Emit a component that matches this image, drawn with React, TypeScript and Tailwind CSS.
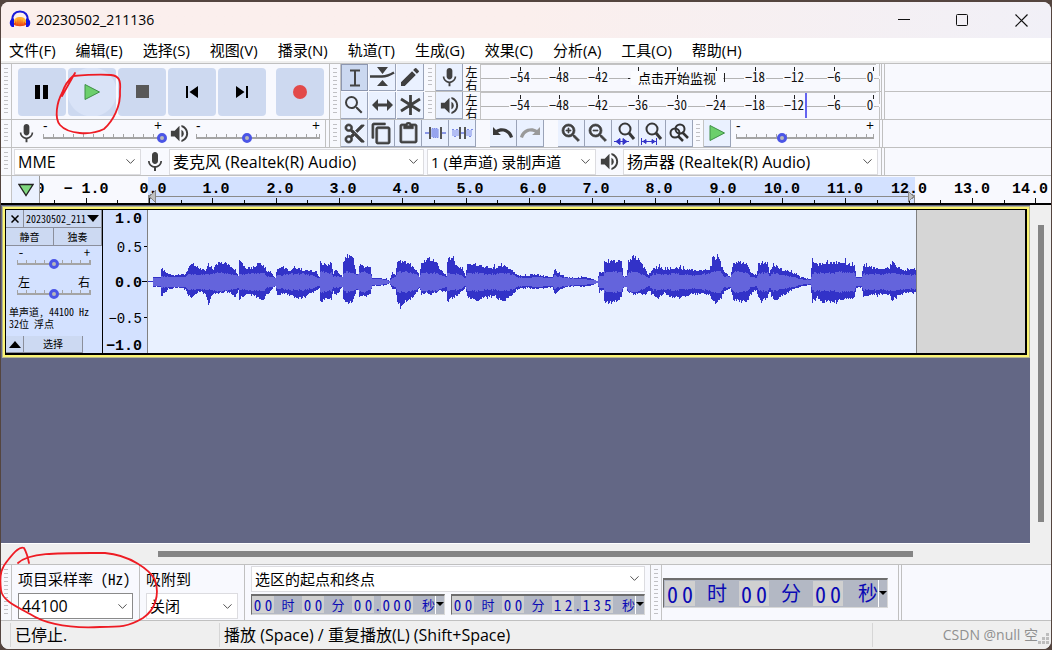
import type { ReactNode } from "react";
import {
  MdContentCopy,
  MdContentCut,
  MdContentPaste,
  MdEdit,
  MdMic,
  MdSearch,
  MdSkipNext,
  MdSkipPrevious,
  MdVolumeUp,
  MdZoomIn,
  MdZoomOut,
} from "react-icons/md";
import { ChevronDown } from "lucide-react";

const FIXED = "font-['Noto_Sans_CJK_SC',sans-serif] [font-feature-settings:'hwid']";
const SCALE = "font-['Liberation_Mono',monospace]";

/* [x, peak above, peak below, rms] */
const ENVELOPE: number[][] = [
  [0, 0, 0, 0], [4, 0, 0, 0], [5, 5, 5, 4], [12, 5, 5, 4], [13, 15, 15, 6], [15, 11, 13, 6], [20, 8, 7, 5],
  [27, 7, 6, 5], [32, 8, 6, 5], [37, 8, 7, 5], [40, 14, 14, 8], [44, 19, 15, 8], [50, 14, 10, 7],
  [57, 12, 12, 8], [60, 18, 22, 8], [65, 13, 12, 8], [68, 19, 12, 9], [74, 20, 11, 9], [80, 17, 10, 8],
  [86, 12, 16, 7], [90, 7, 8, 6], [91, 21, 17, 8], [98, 14, 14, 8], [104, 14, 13, 8], [109, 18, 17, 9],
  [115, 18, 18, 9], [118, 12, 14, 6], [122, 10, 9, 5], [127, 4, 4, 4], [129, 14, 14, 7], [134, 14, 12, 7],
  [142, 12, 13, 8], [149, 14, 17, 8], [156, 12, 16, 8], [162, 12, 12, 7], [168, 10, 9, 5], [171, 5, 6, 4],
  [172, 21, 20, 10], [175, 18, 18, 10], [183, 19, 18, 9], [185, 9, 10, 5], [188, 12, 14, 6], [194, 5, 5, 5],
  [195, 22, 19, 9], [199, 27, 22, 10], [205, 23, 20, 9], [208, 8, 8, 7], [210, 8, 8, 7], [211, 17, 14, 9],
  [216, 16, 15, 10], [222, 14, 12, 8], [224, 4, 4, 3], [232, 4, 4, 3], [238, 3, 3, 2], [241, 1, 1, 1],
  [244, 10, 8, 4], [247, 7, 7, 5], [249, 20, 20, 10], [252, 22, 24, 10], [257, 20, 20, 10], [262, 18, 17, 9],
  [267, 13, 13, 8], [271, 6, 6, 5], [273, 20, 12, 9], [280, 24, 12, 9], [286, 22, 12, 9], [292, 12, 9, 7],
  [298, 7, 10, 5], [299, 22, 20, 9], [303, 24, 17, 8], [308, 17, 14, 8], [314, 14, 9, 6], [317, 6, 6, 4],
  [319, 17, 16, 9], [326, 18, 19, 9], [337, 15, 16, 8], [347, 14, 15, 8], [352, 18, 20, 9], [358, 16, 18, 9],
  [364, 13, 14, 7], [368, 7, 8, 5], [377, 6, 6, 4], [387, 8, 7, 5], [397, 6, 6, 4], [404, 5, 5, 4],
  [406, 13, 12, 7], [412, 7, 8, 5], [419, 5, 5, 4], [427, 4, 4, 3], [437, 5, 5, 3], [444, 3, 3, 2],
  [449, 1, 1, 1], [451, 11, 10, 6], [455, 10, 8, 6], [456, 22, 21, 10], [462, 22, 21, 11], [473, 21, 17, 10],
  [475, 6, 6, 5], [478, 6, 6, 5], [480, 20, 11, 9], [485, 26, 12, 10], [491, 22, 12, 9], [496, 14, 13, 7],
  [500, 7, 9, 4], [505, 14, 14, 8], [509, 15, 17, 8], [516, 13, 12, 7], [522, 14, 15, 8], [530, 14, 17, 8],
  [542, 12, 13, 7], [552, 11, 12, 7], [561, 13, 13, 9], [565, 24, 22, 11], [571, 22, 20, 11], [576, 9, 10, 6],
  [582, 6, 6, 5], [585, 18, 18, 10], [591, 20, 21, 11], [599, 17, 19, 9], [602, 11, 13, 5], [608, 7, 8, 4],
  [610, 18, 16, 8], [613, 20, 21, 9], [619, 20, 16, 9], [621, 10, 10, 6], [625, 18, 18, 9], [634, 12, 15, 7],
  [644, 10, 8, 5], [652, 5, 5, 3], [662, 3, 3, 2], [664, 24, 20, 9], [669, 17, 16, 9], [674, 19, 20, 9],
  [682, 19, 21, 9], [692, 20, 19, 10], [706, 17, 16, 9], [708, 5, 6, 4], [713, 5, 6, 4], [715, 17, 15, 8],
  [722, 15, 13, 8], [732, 14, 13, 8], [741, 15, 14, 8], [744, 20, 18, 9], [750, 14, 14, 8], [757, 12, 11, 7],
  [768, 13, 11, 7],
];

function buildWave() {
  let peaks = "";
  let rms = "";
  let seg = 0;
  let seed = 17;
  const rand = () => {
    seed = (seed * 1103515245 + 12345) % 2147483648;
    return seed / 2147483648;
  };
  for (let x = 5; x < 768; x++) {
    while (ENVELOPE[seg + 1][0] <= x && seg < ENVELOPE.length - 2) seg++;
    const a = ENVELOPE[seg];
    const b = ENVELOPE[seg + 1];
    const t = (x - a[0]) / (b[0] - a[0]);
    const at = (i: number) => a[i] + (b[i] - a[i]) * t;
    const up = Math.round(at(1) * (0.88 + rand() * (rand() > 0.9 ? 0.38 : 0.2)));
    const down = Math.round(at(2) * (0.86 + rand() * (rand() > 0.93 ? 0.3 : 0.2)));
    const r = Math.round(at(3) * (0.9 + rand() * 0.2));
    peaks += `M${x} ${72 - up}h1v${up + down}h-1z`;
    rms += `M${x} ${72 - r}h1v${r * 2}h-1z`;
  }
  return { peaks, rms };
}
const WAVE = buildWave();

function Grip() {
  return (
    <div className="flex w-[11px] shrink-0 justify-center self-stretch border-r border-[#c4c4c4] py-1">
      <div className="w-1 bg-[repeating-linear-gradient(to_bottom,#c0c0c4_0_1px,transparent_1px_4px)]" />
    </div>
  );
}

function ToolButton({ label, pressed, children }: { label: string; pressed?: boolean; children: ReactNode }) {
  return (
    <button
      aria-label={label}
      className={
        pressed
          ? "flex h-[27px] w-[27px] shrink-0 items-center justify-center border border-[#8d97b0] bg-[#cbd8f0] text-[#444]"
          : "flex h-[27px] w-[27px] shrink-0 items-center justify-center border-r border-b border-[#9aa3b8] bg-[#eaf1ff] text-[#404040]"
      }
    >
      {children}
    </button>
  );
}

function Slider({ label, value, dense, low = "-", high = "+" }: { label: string; value: number; dense?: boolean; low?: string; high?: string }) {
  return (
    <label className="flex min-w-0 flex-1 flex-col self-start">
      <span className={dense ? "flex h-3 justify-between px-[6px] text-xs leading-3" : "flex h-3 justify-between px-[5px] text-sm leading-3"}>
        <span>{low}</span>
        <span>{high}</span>
      </span>
      <span className="grid h-[11px] items-center">
        <span
          className={
            dense
              ? "col-start-1 row-start-1 mx-[5px] mb-[2px] h-[5px] border-r border-b-2 border-[#a4a4a4] bg-[repeating-linear-gradient(to_right,#a4a4a4_0_1px,transparent_1px_9px)]"
              : "col-start-1 row-start-1 mx-[5px] mb-[2px] h-[5px] border-r border-b-2 border-[#a4a4a4] bg-[repeating-linear-gradient(to_right,#a4a4a4_0_1px,transparent_1px_10px)]"
          }
        />
        <input
          type="range"
          aria-label={label}
          defaultValue={value}
          className="col-start-1 row-start-1 h-[11px] w-full appearance-none bg-transparent [&::-webkit-slider-thumb]:h-[10px] [&::-webkit-slider-thumb]:w-[10px] [&::-webkit-slider-thumb]:appearance-none [&::-webkit-slider-thumb]:rounded-full [&::-webkit-slider-thumb]:border-[3px] [&::-webkit-slider-thumb]:border-[#4b55e6] [&::-webkit-slider-thumb]:bg-[#b8b8b8]"
        />
      </span>
    </label>
  );
}

function Combo({ label, id, value, dark, cjk }: { label?: string; id?: string; value: string; dark?: boolean; cjk?: boolean }) {
  return (
    <div className="grid min-w-0 flex-1 items-center">
      <select
        id={id}
        aria-label={label}
        className={
          dark
            ? "col-start-1 row-start-1 h-[26px] w-full appearance-none border border-[#8a8a8a] bg-white pl-[3px] text-base leading-6 text-black"
            : cjk
              ? "col-start-1 row-start-1 h-[26px] w-full appearance-none border border-[#dcdce0] bg-white pl-[3px] text-[15px] leading-6 text-black"
              : "col-start-1 row-start-1 h-[26px] w-full appearance-none border border-[#dcdce0] bg-white pl-[3px] text-base leading-6 text-black"
        }
      >
        <option>{value}</option>
      </select>
      <ChevronDown className="pointer-events-none col-start-1 row-start-1 mr-[3px] justify-self-end text-[#444]" size={15} strokeWidth={1.5} />
    </div>
  );
}

function Meter({ monitor, marker }: { monitor?: boolean; marker?: number }) {
  const ticks = [-54, -48, -42, -36, -30, -24, -18, -12, -6, 0];
  return (
    <svg width="401" height="27" className="shrink-0" shapeRendering="crispEdges">
      <path d="M0.5 0v27M0 0.5h396M396 14.5h3M399.5 0v12M399.5 15v12" stroke="#c2c2c2" fill="none" />
      <path d="M1 14.5h395" stroke="#b4b4b4" />
      {ticks.map((t, i) => {
        const x = Math.round(40 + i * 39.2);
        const tx = t === 0 ? x - 3 : x;
        const covered = monitor && t <= -24 && t >= -36;
        return (
          <g key={t}>
            <path d={`M${x + 0.5} 3v4`} stroke="#222" />
            {!covered && (
              <>
                <rect x={tx - (t === 0 ? 4 : t === -6 ? 7 : 11)} y="9" width={t === 0 ? 8 : t === -6 ? 14 : 22} height="10" fill="#f8f9fe" />
                <text x={tx} y="18" textAnchor="middle" fontSize="13" fill="#111" className={FIXED}>
                  {t < 0 ? `−${-t}` : t}
                </text>
              </>
            )}
          </g>
        );
      })}
      {marker && <path d={`M${marker} 1v25`} stroke="#6464f0" strokeWidth="2" />}
      {monitor && (
        <g>
          <rect x="151" y="7" width="92" height="14" fill="#fbfcff" />
          <path d="M148 14.5h2M244.500 9v9" stroke="#222" />
          <text x="158" y="19" fontSize="13" fill="#000" className="font-['Noto_Sans_CJK_SC',sans-serif]">
            点击开始监视
          </text>
        </g>
      )}
    </svg>
  );
}

function TransportButton({ label, hover, children }: { label: string; hover?: boolean; children: ReactNode }) {
  return (
    <button
      aria-label={label}
      className={
        hover
          ? "flex size-12 items-center justify-center rounded bg-[radial-gradient(circle,#d9e3f7_24px,#cdd9f0_25px)]"
          : "flex size-12 items-center justify-center rounded bg-[#cdd9f0]"
      }
    >
      {children}
    </button>
  );
}

const PlayGlyph = () => (
  <svg width="18" height="18" viewBox="0 0 18 18">
    <path d="M2 1.5 16.500 9 2 16.500z" fill="#6ccf6c" stroke="#3f8f46" strokeWidth="1" />
  </svg>
);

const Lens = ({ kind }: { kind: "sel" | "fit" }) => (
  <svg width="22" height="24" viewBox="0 0 22 24" fill="none">
    <circle cx="11" cy="8" r="5.500" stroke="#383838" strokeWidth="2" />
    <path d="m15 12 5 6" stroke="#383838" strokeWidth="3" />
    {kind === "sel" ? (
      <path d="M0 20.500h15M6 17.500v6l-4-3zM9 17.500v6l4-3z" stroke="#3535c8" fill="#3535c8" />
    ) : (
      <path d="M0.5 17v7M15.500 17v7M1 20.500h14M2 20.500l3-2v4zM14 20.500l-3-2v4z" stroke="#3535c8" fill="#3535c8" />
    )}
  </svg>
);

const MENU = ["文件(F)", "编辑(E)", "选择(S)", "视图(V)", "播录(N)", "轨道(T)", "生成(G)", "效果(C)", "分析(A)", "工具(O)", "帮助(H)"];

function DockEnd() {
  return <div className="flex-1 self-stretch border-l-4 border-double border-[#c0c0c0]" />;
}

function Timeline() {
  const x0 = 109;
  const pitch = 63.3;
  const ticks: ReactNode[] = [];
  for (let i = -3; i <= 28; i++) {
    const x = Math.round(x0 + (i * pitch) / 2) + 0.5;
    ticks.push(<path key={i} d={`M${x} ${i % 2 === 0 ? 22 : 24}V27`} stroke="#111" />);
  }
  return (
    <svg className="h-[27px] min-w-0 flex-1" shapeRendering="crispEdges">
      <rect x="108" y="1" width="767" height="26" fill="#d3e1ff" />
      {Array.from({ length: 17 }, (_, k) => k - 2).map((n) => {
        const x = Math.round(x0 + n * pitch) + (n >= 0 && n < 10 ? 4 : 0) - (n === 14 ? 5 : 0);
        return (
          <text key={n} x={x} y="17" textAnchor="middle" fontSize="15" fontWeight="700" fill="#000" xmlSpace="preserve" className={SCALE}>
            {n < 0 ? `− ${-n}.0` : `${n}.0`}
          </text>
        );
      })}
      {ticks}
      <path d="M113 20.500h756M108.500 19v8M874.500 19v8" stroke="#8a8a8a" strokeWidth="1" />
      <path d="M115 15v11l-6-5.500zM868 15v11l6-5.500z" fill="#c0c0c0" stroke="#888" />
    </svg>
  );
}

function Digits({ text, big }: { text: string; big?: boolean }) {
  return (
    <span
      className={
        big
          ? "flex h-[25px] w-[30px] items-center justify-around bg-[#d0d0d0]"
          : text.length === 3
            ? "flex h-[17px] w-8 items-center justify-around bg-[#d0d0d0]"
            : "flex h-[17px] w-[22px] items-center justify-around bg-[#d0d0d0]"
      }
    >
      {text.split("").map((c, i) => (
        <span key={i}>{c}</span>
      ))}
    </span>
  );
}

function TimeField({ label, s, ms }: { label: string; s: string; ms: string }) {
  return (
    <div
      role="group"
      aria-label={label}
      className="flex h-[21px] w-[194px] items-center border border-t-2 border-[#d8d8d8] border-t-[#6e6e6e] border-l-[#6e6e6e] bg-[#b3b8c4] text-[15px] leading-4 text-[#0a0ab4]"
    >
      <Digits text="00" />
      <span className="w-7 text-center text-[13px]">时</span>
      <Digits text="00" />
      <span className="w-7 text-center text-[13px]">分</span>
      <Digits text={s} />
      <span className="w-[7px] text-center">.</span>
      <Digits text={ms} />
      <span className="flex-1 text-right text-[13px]">秒</span>
      <DropButton />
    </div>
  );
}

function DropButton() {
  return (
    <button aria-label="时间格式" className="flex w-[9px] items-center justify-center self-stretch border-l border-white text-black">
      <svg width="8" height="5">
        <path d="M0 0h8L4 4z" fill="#000" />
      </svg>
    </button>
  );
}

const cell = "flex items-center justify-center border-r border-b border-[#8b8f9c] bg-[#ccd9f2]";
const heavy = { stroke: "currentColor", strokeWidth: 0.7, className: "[&>[fill=none]]:stroke-none" };

export default function App() {
  return (
    <div className="relative flex min-h-screen flex-col overflow-hidden bg-[#54453f] pt-[2px] pr-px pb-px pl-px font-['Open_Sans','Noto_Sans_CJK_SC',sans-serif] text-black">
      <div className="flex flex-1 flex-col overflow-hidden rounded-lg bg-[#f8f9fe]">
        <header className="flex h-9 items-center bg-linear-to-r from-[#fbefed] from-50% to-[#f1f0f7] pl-2">
          <svg width="22" height="20" viewBox="0 0 22 20">
            <path d="M4 13c1-5 4-6 7-6s6 1 7 6c-2 4-12 4-14 0z" fill="#ffb030" />
            <path d="M4 13h2l1-3 1 5 1-7 1 8 1-8 1 7 1-6 1 6 1-4 1 2h2v1c-3 3-11 3-14 0z" fill="#ef4a16" />
            <path d="M3 11C3 4.500 6 1.500 11 1.500S19 4.500 19 11" stroke="#1a1ad8" strokeWidth="2" fill="none" />
            <path d="M3 8.500h2v8.500H3c-3-2-3-6 0-8.500zM19 8.500h-2v8.500h2c3-2 3-6 0-8.500z" fill="#1414e0" />
          </svg>
          <h1 className="ml-[5px] flex-1 text-sm leading-5">20230502_211136</h1>
          <button aria-label="最小化" className="flex h-9 w-[58px] items-center justify-center">
            <svg width="12" height="12"><path d="M0 5.500h12" stroke="#111" /></svg>
          </button>
          <button aria-label="最大化" className="flex h-9 w-[58px] items-center justify-center">
            <svg width="13" height="13"><rect x="0.5" y="0.5" width="11" height="11" rx="1" stroke="#111" fill="none" /></svg>
          </button>
          <button aria-label="关闭窗口" className="flex h-9 w-[60px] items-center justify-center">
            <svg width="13" height="13"><path d="m0.500 0.500 12 12m0-12-12 12" stroke="#111" strokeWidth="1.200" /></svg>
          </button>
        </header>

        <nav className="flex h-[25px] items-center gap-5 border-b-2 border-[#efefef] bg-white pl-2">
          {MENU.map((m) => (
            <button key={m} className="text-[15px] leading-6 whitespace-nowrap">{m}</button>
          ))}
        </nav>

        <section aria-label="工具栏" className="border-t border-[#c0c0c0]">
          <div className="flex h-14 border-b border-[#c0c0c0]">
            <div className="flex w-[329px] border-r border-[#c0c0c0]">
              <Grip />
              <div className="flex items-center gap-[2px] pl-[6px]">
                <TransportButton label="暂停">
                  <svg width="14" height="14"><path d="M0 0h5v14H0zM8 0h5v14H8z" fill="#000" /></svg>
                </TransportButton>
                <TransportButton label="播放" hover><PlayGlyph /></TransportButton>
                <TransportButton label="停止"><span className="size-[13px] bg-[#585858]" /></TransportButton>
                <TransportButton label="跳到开头"><MdSkipPrevious size={24} /></TransportButton>
                <TransportButton label="跳到结尾"><MdSkipNext size={24} /></TransportButton>
                <div className="pl-2">
                  <TransportButton label="录制"><span className="size-[14px] rounded-full bg-[#e24a4a]" /></TransportButton>
                </div>
              </div>
            </div>
            <Grip />
            <div className="grid grid-cols-3 gap-px pr-px">
              <ToolButton label="选择工具" pressed>
                <svg width="12" height="18"><path d="M1 1.500h10M1 16.500h10M6 1v16" stroke="#444" strokeWidth="2" /></svg>
              </ToolButton>
              <ToolButton label="包络工具">
                <svg width="25" height="20"><path d="M7 0h11l-5.500 7zM7 19h11l-5.500-6z" fill="#404040" /><path d="M0 9.500h12c5 0 7-1 12-4" stroke="#404040" strokeWidth="2.500" fill="none" /></svg>
              </ToolButton>
              <ToolButton label="绘制工具"><MdEdit size={24} /></ToolButton>
              <ToolButton label="缩放工具"><MdSearch size={24} /></ToolButton>
              <ToolButton label="时间移动工具">
                <svg width="21" height="14"><path d="M0 7l6-6v4.500h9V1l6 6-6 6V8.500H6V13z" fill="#404040" /></svg>
              </ToolButton>
              <ToolButton label="多功能工具">
                <svg width="21" height="20"><path d="M10.500 0v20M1 4l19 12M20 4 1 16" stroke="#404040" strokeWidth="2.800" /></svg>
              </ToolButton>
            </div>
            <div className="flex flex-col">
              <div className="flex h-7 border-b border-[#c0c0c0]">
                <Grip />
                <ToolButton label="录制电平"><MdMic size={23} /></ToolButton>
                <div className="flex w-[17px] flex-col items-center pt-px font-['Noto_Sans_CJK_SC',sans-serif] text-xs leading-[13px]"><span>左</span><span>右</span></div>
                <Meter monitor />
              </div>
              <div className="flex h-[27px]">
                <Grip />
                <ToolButton label="播放电平"><MdVolumeUp size={23} /></ToolButton>
                <div className="flex w-[17px] flex-col items-center pt-px font-['Noto_Sans_CJK_SC',sans-serif] text-xs leading-[13px]"><span>左</span><span>右</span></div>
                <Meter marker={326} />
              </div>
            </div>
            <div className="flex flex-1 flex-col border-l-4 border-double border-[#c0c0c0]">
              <div className="h-7 border-b border-[#c0c0c0]" />
            </div>
          </div>

          <div className="flex h-7 border-b border-[#c0c0c0]">
            <div className="flex w-[325px] items-center border-r border-[#c0c0c0]">
              <Grip />
              <MdMic size={23} className="ml-[3px] shrink-0 text-[#404040]" />
              <div className="flex w-[129px] self-stretch"><Slider label="录制音量" value={100} /></div>
              <MdVolumeUp size={23} className="ml-px shrink-0 text-[#404040]" />
              <Slider label="播放音量" value={41} />
            </div>
            <div className="w-1 border-r border-[#c0c0c0]" />
            <Grip />
            <ToolButton label="剪切"><MdContentCut size={23} {...heavy} /></ToolButton>
            <ToolButton label="复制"><MdContentCopy size={23} {...heavy} /></ToolButton>
            <ToolButton label="粘贴"><MdContentPaste size={23} {...heavy} /></ToolButton>
            <ToolButton label="修剪音频">
              <svg width="21" height="16"><path d="M0 8h5M16 8h5" stroke="#6a7ae0" strokeWidth="1.500" /><path d="M5 2v12M16 2v12" stroke="#555" strokeWidth="2" /><path d="M7 12V4q1-2 1 0v8q1 2 1 0V4q1-2 1 0v8q1 2 1 0V4q1-2 1 0v8q1 2 1 0V4" stroke="#7a8ae8" fill="none" /></svg>
            </ToolButton>
            <ToolButton label="静音音频">
              <svg width="21" height="16"><path d="M9 8h4" stroke="#6a7ae0" strokeWidth="1.500" /><path d="M8 2v12M13 2v12" stroke="#555" strokeWidth="2" /><path d="M0 11V5q1-2 2 0v6q1 2 2 0V5q1-2 2 0v6M15 11V5q1-2 2 0v6q1 2 2 0V5q1-2 2 0" stroke="#7a8ae8" fill="none" /></svg>
            </ToolButton>
            <div className="ml-[14px] flex">
              <ToolButton label="撤销">
                <svg width="22" height="18"><path d="M1 3v8h8L6 8.500C11 6 16 8 18 14l3-1C19 5 10 2 4 6z" fill="#383838" /></svg>
              </ToolButton>
              <ToolButton label="重做">
                <svg width="22" height="18"><path d="M21 3v8h-8l3-2.500C11 6 6 8 4 14l-3-1C3 5 12 2 18 6z" fill="#9a9a9a" /></svg>
              </ToolButton>
            </div>
            <div className="ml-[14px] flex">
              <ToolButton label="放大"><MdZoomIn size={24} {...heavy} /></ToolButton>
              <ToolButton label="缩小"><MdZoomOut size={24} {...heavy} /></ToolButton>
              <ToolButton label="适应选区"><Lens kind="sel" /></ToolButton>
              <ToolButton label="适应项目"><Lens kind="fit" /></ToolButton>
              <ToolButton label="切换缩放">
                <svg width="20" height="20" fill="none" stroke="#333" strokeWidth="2"><circle cx="11" cy="6" r="4.500" /><circle cx="6" cy="10" r="4.500" /><path d="m13 9 6 6M9 13l5 5" strokeWidth="2.500" /></svg>
              </ToolButton>
            </div>
            <Grip />
            <ToolButton label="按速度播放"><PlayGlyph /></ToolButton>
            <div className="flex w-[148px]"><Slider label="播放速度" value={33} /></div>
            <DockEnd />
          </div>

          <div className="flex h-7 items-center border-b border-[#c0c0c0]">
            <Grip />
            <div className="flex w-[129px] pl-[2px]"><Combo label="音频主机" value="MME" /></div>
            <MdMic size={24} className="mx-[2px] shrink-0 text-[#404040]" />
            <div className="flex w-[255px]"><Combo label="录制设备" value="麦克风 (Realtek(R) Audio)" /></div>
            <div className="flex w-[172px] pl-[3px]"><Combo label="录制声道数" value="1 (单声道) 录制声道" cjk /></div>
            <MdVolumeUp size={23} className="mx-[2px] shrink-0 text-[#404040]" />
            <div className="flex w-[258px] pr-[3px]"><Combo label="播放设备" value="扬声器 (Realtek(R) Audio)" /></div>
            <DockEnd />
          </div>
        </section>

        <div className="flex h-[29px] border-b-2 border-black">
          <div className="w-[11px] border-r border-[#c4c4c4]" />
          <button aria-label="固定播放头" className="flex w-7 items-center justify-center border-r border-[#999] bg-[#eaf1ff]">
            <svg width="16" height="14"><path d="M1 1.500h14l-7 11z" fill="#7fd87f" stroke="#222" strokeWidth="1.300" /></svg>
          </button>
          <Timeline />
        </div>

        <main className="flex flex-1 bg-[#efefef]">
          <div className="flex flex-1 flex-col border-b border-white bg-[#636785] pt-px pl-px">
            <div className="border border-[#b5b58c] bg-[#fbf474] p-[2px]">
              <div className="flex h-[146px] border border-r-2 border-b-2 border-black bg-[#d6d6d6]">
                <div className="flex w-[97px] flex-col border-r border-black bg-[#d3e1ff] font-['Noto_Sans_CJK_SC',sans-serif] text-[10px] leading-3 [font-feature-settings:'hwid']">
                  <div className="flex h-[18px]">
                    <button aria-label="关闭轨道" className={cell + " w-[18px]"}>
                      <svg width="8" height="8"><path d="m0.500 0.500 7 7m0-7-7 7" stroke="#000" strokeWidth="1.500" /></svg>
                    </button>
                    <button className={cell + " flex-1"}>
                      <span>20230502_211</span>
                      <svg width="12" height="7" className="ml-px"><path d="M0 0h12L6 7z" /></svg>
                    </button>
                  </div>
                  <div className="flex h-[18px]">
                    <button className={cell + " flex-1"}>静音</button>
                    <button className={cell + " flex-1"}>独奏</button>
                  </div>
                  <div className="flex px-[6px]"><Slider label="增益" value={50} dense /></div>
                  <div className="flex px-[6px] pt-[7px]"><Slider label="声像" value={50} dense low="左" high="右" /></div>
                  <p className="pt-[7px] pl-[3px]">单声道, 44100 Hz</p>
                  <p className="pl-[3px]">32位 浮点</p>
                  <div className="mt-auto flex h-[17px]">
                    <button aria-label="折叠" className={cell + " w-[18px]"}>
                      <svg width="12" height="7"><path d="M0 7h12L6 0z" /></svg>
                    </button>
                    <button className={cell + " w-[59px]"}>选择</button>
                  </div>
                </div>
                <div className="flex w-[45px] flex-col border-r border-[#808080] bg-[#d3e1ff]">
                  <svg width="44" height="143" shapeRendering="crispEdges" className={SCALE}>
                    <g textAnchor="end" fontSize="15" fontWeight="700">
                      <text x="39" y="13">1.0</text>
                      <text x="39" y="77">0.0</text>
                      <text x="39" y="140">−1.0</text>
                    </g>
                    <g textAnchor="end" fontSize="14">
                      <text x="39" y="42">0.5</text>
                      <text x="39" y="113">−0.5</text>
                    </g>
                    <path d="M41 36.500h3M39 71.500h5M41 107.500h3" stroke="#000" />
                  </svg>
                </div>
                <svg width="768" height="143" shapeRendering="crispEdges" className="shrink-0 bg-[#e9f1ff]">
                  <path d="M0 71.500h768" stroke="#3232c8" />
                  <path d={WAVE.peaks} fill="#3232c8" />
                  <path d={WAVE.rms} fill="#6464dc" />
                </svg>
                <div className="flex-1 border-l border-[#808080]" />
              </div>
            </div>
          </div>
          <div className="flex w-[21px] justify-center pt-5 pb-[22px]">
            <div className="w-[6px] bg-[#858585]" />
          </div>
        </main>
        <div className="flex h-5 items-center bg-[#efefef] pr-[138px] pl-[157px]">
          <div className="h-[6px] flex-1 bg-[#858585]" />
        </div>

        <section aria-label="选区工具栏" className="flex h-[57px] border-t border-b border-[#c0c0c0]">
          <Grip />
          <div className="grid grid-cols-[121px_105px_auto] pl-[6px]">
            <div className="flex items-center">
              <label htmlFor="rate" className={"w-[121px] text-[15px] leading-6 whitespace-pre " + FIXED}>项目采样率 (Hz)</label>
            </div>
            <div className="flex items-center border-l border-[#c0c0c0] pl-[6px] font-['Noto_Sans_CJK_SC',sans-serif] text-[15px] leading-6">
              <label htmlFor="snap">吸附到</label>
            </div>
            <div className="flex border-l border-[#c0c0c0] pl-[6px]">
              <div className="flex w-[394px]"><Combo label="选区模式" value="选区的起点和终点" cjk /></div>
            </div>
            <div className="flex pr-[6px]"><Combo id="rate" value="44100" dark /></div>
            <div className="flex border-l border-[#c0c0c0] pr-[6px] pl-[6px]"><Combo id="snap" value="关闭" cjk /></div>
            <div className={"flex items-center gap-[6px] border-l border-[#c0c0c0] pb-1 pl-[6px] " + FIXED}>
              <TimeField label="选区起点" s="00" ms="000" />
              <TimeField label="选区终点" s="12" ms="135" />
            </div>
          </div>
          <div className="w-[6px] border-r border-[#c0c0c0]" />
          <Grip />
          <div className="flex items-center pr-[10px] pl-px">
            <div
              role="group"
              aria-label="音频位置"
              className={"flex h-[30px] w-[225px] items-center border border-t-2 border-[#d8d8d8] border-t-[#6e6e6e] border-l-[#6e6e6e] bg-[#b3b8c4] pl-px text-[22px] leading-6 text-[#0a0ab4] " + FIXED}
            >
              <Digits text="00" big />
              <span className="w-11 text-center text-xl leading-6">时</span>
              <Digits text="00" big />
              <span className="w-11 text-center text-xl leading-6">分</span>
              <Digits text="00" big />
              <span className="flex-1 text-right text-xl leading-6">秒</span>
              <DropButton />
            </div>
          </div>
          <DockEnd />
        </section>

        <footer className="flex h-7 items-center bg-[#efefef] py-[2px] text-base leading-6">
          <div className="w-[10px] self-stretch border-r border-[#d6d6d6]" />
          <div className="w-[209px] self-stretch border-r border-[#d6d6d6] pl-1">已停止.</div>
          <div className="flex-1 self-stretch border-r border-[#d6d6d6] pl-1">播放 (Space) / 重复播放(L) (Shift+Space)</div>
          <div className="flex w-[178px] items-center justify-end pr-px">
            <span className="text-sm text-[#8f8f8f]">CSDN @null 空</span>
            <svg width="12" height="12" className="self-end"><path d="M8 0h3v3H8zM8 4h3v3H8zM4 4h3v3H4zM8 8h3v3H8zM4 8h3v3H4zM0 8h3v3H0z" fill="#bdbdbd" /></svg>
          </div>
        </footer>
      </div>

      <svg className="pointer-events-none absolute top-0 left-0" width="170" height="650" fill="none" stroke="#ee1c24" strokeWidth="1.800" strokeLinecap="round" aria-hidden="true">
        <path d="M62 96 75 73M74 75C67 81 64 87 62 93C57 102 54 118 60 125C68 134 90 136 104 129C113 121 121 106 120 91C121 80 119 76 111 75C100 74 85 75 73 76" />
        <path d="M18 563C30 552 60 553 105 553C130 555 150 570 155 580C160 595 155 610 143 618C128 627 120 627 100 627C80 628 50 627 30 614C15 606 2 600 1 590C-1 573 2 567 8 560C15 551 20 546 24 548C27 553 28 558 29 563" />
      </svg>
    </div>
  );
}
